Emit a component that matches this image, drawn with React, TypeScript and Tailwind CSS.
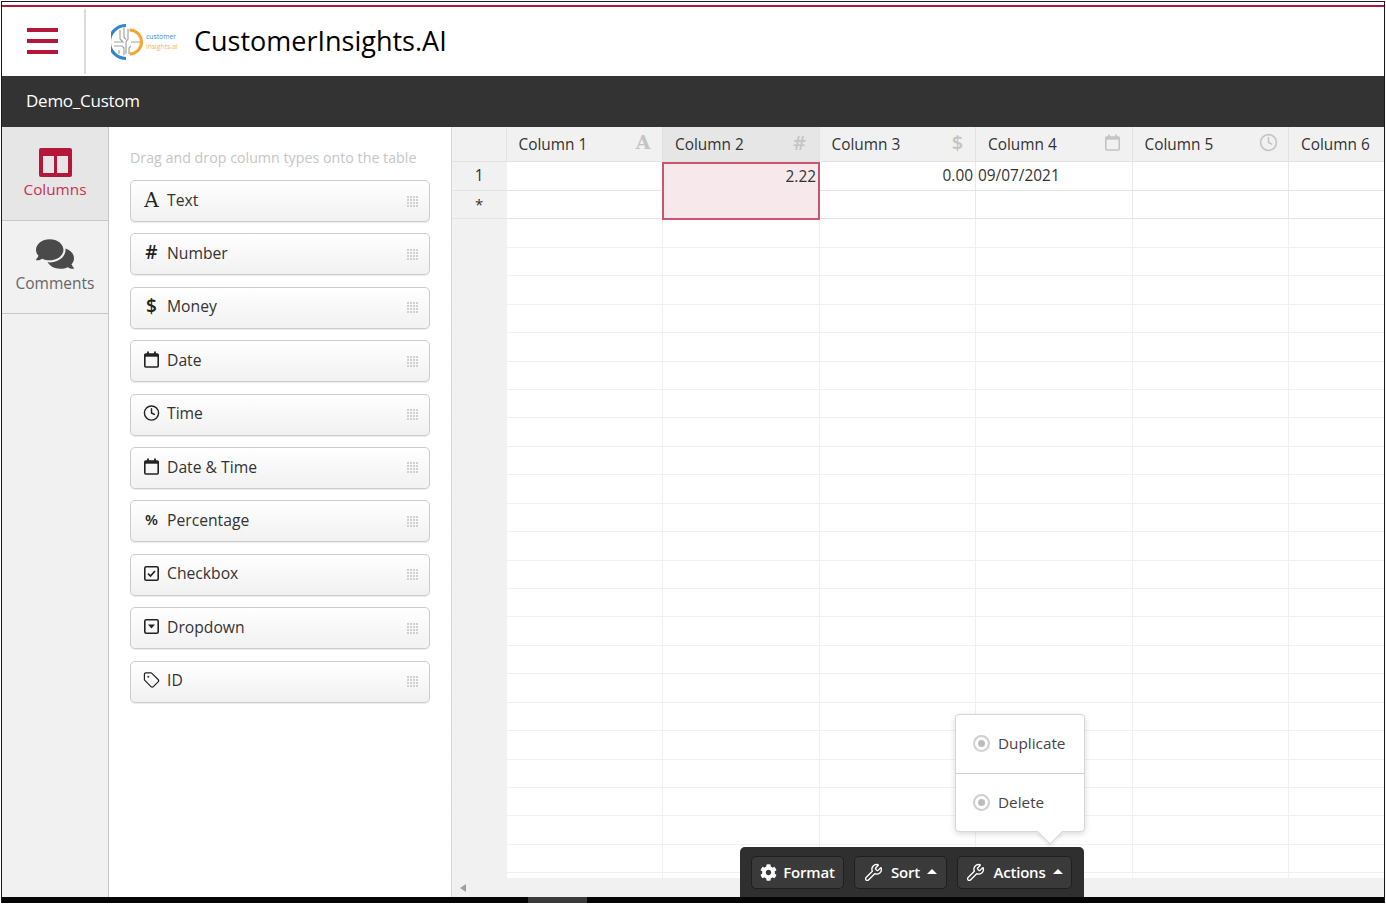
import React from 'react';
import { Clock, Wrench, Tag } from 'lucide-react';
import { FaComments, FaCog } from 'react-icons/fa';

const CalendarIcon: React.FC<{ className?: string }> = ({ className }) => (
  <svg viewBox="0 0 15 17" className={className} fill="none" stroke="currentColor" strokeWidth="1.6">
    <rect x="0.8" y="3" width="13.4" height="13" rx="1" />
    <path d="M0.8 4.4h13.4" strokeWidth="2.6" />
    <path d="M4 0.4v3M11 0.4v3" strokeWidth="1.8" />
  </svg>
);

const CheckIcon: React.FC = () => (
  <svg viewBox="0 0 15 15" className="w-[15px] h-[15px]" fill="none" stroke="currentColor" strokeWidth="1.6">
    <rect x="0.8" y="0.8" width="13.4" height="13.4" rx="1.5" />
    <path d="M4 7.6l2.5 2.5L11 5" strokeWidth="1.7" />
  </svg>
);

const DropdownIcon: React.FC = () => (
  <svg viewBox="0 0 15 15" className="w-[15px] h-[15px]" fill="none" stroke="currentColor" strokeWidth="1.6">
    <rect x="0.8" y="0.8" width="13.4" height="13.4" rx="1.5" />
    <path d="M4 5.6h7L7.5 9.6z" fill="currentColor" stroke="none" />
  </svg>
);

const Grip: React.FC = () => (
  <div className="grid grid-cols-4 gap-px w-[11px] h-[11px]">
    {Array.from({ length: 16 }).map((_, i) => (
      <span key={i} className="w-[2px] h-[2px] bg-[#d0d0d0]" />
    ))}
  </div>
);

const Logo: React.FC = () => (
  <div className="flex items-center gap-[2px] w-[68px]">
    <svg viewBox="0 0 33 36" className="w-[33px] h-[36px] shrink-0" fill="none">
      <path d="M15 1.5A16.5 16.5 0 0 0 15 34.5" stroke="#2f86c9" strokeWidth="3" />
      <path d="M18.5 6A12 12 0 0 1 18.5 30" stroke="#f5a531" strokeWidth="3" />
      <path
        d="M9 6v9l3 3H3M13 3.5v10l2 2M17 5v10l-2 3v12M3 22h8l2 2v7M20 18h9M20 22l-2 2v6M8 26v4"
        stroke="#a3a3a3"
        strokeWidth="1.2"
      />
    </svg>
    <div className="text-[6.8px] leading-[9.5px] whitespace-nowrap">
      <div className="text-[#3d8fcb]">customer</div>
      <div className="text-[#f2b463]">insights.ai</div>
    </div>
  </div>
);

const types = [
  { label: 'Text', icon: <span className="font-['DejaVu_Serif',serif] text-[20px] leading-none">A</span> },
  { label: 'Number', icon: <span className="font-semibold text-[19px] leading-none">#</span> },
  { label: 'Money', icon: <span className="font-semibold text-[19px] leading-none">$</span> },
  { label: 'Date', icon: <CalendarIcon className="w-[15px] h-[17px]" /> },
  { label: 'Time', icon: <Clock size={18} strokeWidth={2} /> },
  { label: 'Date & Time', icon: <CalendarIcon className="w-[15px] h-[17px]" /> },
  { label: 'Percentage', icon: <span className="font-semibold text-[15px] leading-none">%</span> },
  { label: 'Checkbox', icon: <CheckIcon /> },
  { label: 'Dropdown', icon: <DropdownIcon /> },
  { label: 'ID', icon: <Tag size={18} strokeWidth={1.7} /> },
];

const columns = [
  { name: 'Column 1', icon: <span className="font-['DejaVu_Serif',serif] font-bold text-[19px] leading-none">A</span> },
  { name: 'Column 2', icon: <span className="font-semibold text-[20px] leading-none">#</span>, active: true },
  { name: 'Column 3', icon: <span className="ml-[3px] font-semibold text-[20px] leading-none">$</span> },
  { name: 'Column 4', icon: <CalendarIcon className="w-[15px] h-[17px]" /> },
  { name: 'Column 5', icon: <Clock size={19} strokeWidth={2} className="-ml-[1px]" /> },
  { name: 'Column 6', icon: null },
];

const gridCols = 'grid grid-cols-[54.5px_156.5px_156.5px_156.5px_156.5px_156.5px_96px]';

const App: React.FC = () => {
  const emptyRows = Array.from({ length: 24 });

  return (
    <div className="w-[1386px] h-[904px] bg-white pt-px pl-px overflow-hidden font-['Open_Sans',sans-serif]">
      <div className="w-[1384px] h-[902px] flex flex-col border-x border-t border-[#1a1a1a] relative overflow-hidden">
        <div className="h-[3px] bg-white" />
        <div className="h-[2px] bg-[#a8193a]" />

        <header className="h-[69px] flex bg-white">
          <div className="w-[84px] my-[2px] pr-[2px] border-r-2 border-[#dcdcdc] flex items-center justify-center">
            <div className="w-[31px] mb-[2px] flex flex-col gap-[7px]">
              <span className="h-[4px] bg-[#b5173a]" />
              <span className="h-[4px] bg-[#b5173a]" />
              <span className="h-[4px] bg-[#b5173a]" />
            </div>
          </div>
          <div className="pl-[25px] flex items-center">
            <Logo />
            <h1 className="ml-[15px] mb-[2px] text-[27px] leading-none text-black">CustomerInsights.AI</h1>
          </div>
        </header>

        <div className="h-[51px] bg-[#333333] flex items-center pl-[24px] pb-[2px] text-[17px] tracking-[-0.25px] text-white">
          Demo_Custom
        </div>

        <div className="flex-1 flex min-h-0">
          <nav className="w-[107px] bg-[#f1f1f1] border-r border-[#c4c4c4] shrink-0">
            <div className="h-[94px] bg-[#e6e6e6] border-b border-[#c8c8c8] flex flex-col items-center pt-[21px]">
              <div className="w-[33px] h-[29px] rounded-[2px] bg-[#b5173a] px-[4px] pt-[8px] pb-[4px] flex gap-[3px]">
                <span className="flex-1 bg-[#e6e6e6]" />
                <span className="flex-1 bg-[#e6e6e6]" />
              </div>
              <span className="mt-[1px] text-[15.3px] leading-[22px] text-[#c5324f]">Columns</span>
            </div>
            <div className="h-[93px] border-b border-[#c8c8c8] flex flex-col items-center pt-[14px] text-[#4a4a4a]">
              <FaComments size={38} />
              <span className="-mt-[1px] text-[15.5px] leading-[22px] text-[#666]">Comments</span>
            </div>
          </nav>

          <aside className="w-[343px] shrink-0 bg-white border-r border-[#d8d8d8] pl-[21px] pt-[21px]">
            <p className="text-[14.25px] leading-[20px] whitespace-nowrap text-[#c6c6c6]">Drag and drop column types onto the table</p>
            <div className="mt-[12px] w-[300px] flex flex-col gap-[11.4px]">
              {types.map(type => (
                <div
                  key={type.label}
                  className="h-[42px] rounded-[5px] border border-[#cccccc] bg-gradient-to-b from-white to-[#f1f1f1] shadow-[0_1px_1px_rgba(0,0,0,0.08)] flex items-center pl-[12px] pr-[11px] text-[#222]"
                >
                  <span className="w-[17px] flex justify-center -mt-[3px]">{type.icon}</span>
                  <span className="ml-[7px] text-[15.7px] leading-none text-[#333] -mt-[1px]">{type.label}</span>
                  <span className="ml-auto"><Grip /></span>
                </div>
              ))}
            </div>
          </aside>

          <main className="flex-1 min-w-0 bg-[#f1f1f1] flex flex-col relative">
            <div className={`${gridCols} h-[35px] border-b border-[#e2e2e2]`}>
              <div className="border-r border-[#e2e2e2]" />
              {columns.map(col => (
                <div
                  key={col.name}
                  className={`flex items-center justify-between pl-[12px] pr-[10px] pt-[1px] border-r border-[#e2e2e2] text-[#c4c4c4] whitespace-nowrap overflow-hidden ${col.active ? 'bg-[#e6e6e6]' : ''}`}
                >
                  <span className="text-[15.4px] text-[#333]">{col.name}</span>
                  <span className="w-[18px] flex justify-center -mt-[4px]">{col.icon}</span>
                </div>
              ))}
            </div>

            <div className="h-[716px] overflow-hidden">
              <div className={`${gridCols} h-[29px] border-b border-[#e4e4e4] text-[15.4px] text-[#333]`}>
                <div className="flex items-center justify-center">1</div>
                <div className="bg-white border-r border-[#e8e8e8]" />
                <div className="bg-white border-r border-[#e8e8e8]" />
                <div className="bg-white border-r border-[#e8e8e8] flex items-center justify-end pr-[2px]">0.00</div>
                <div className="bg-white border-r border-[#e8e8e8] flex items-center pl-[2px]">09/07/2021</div>
                <div className="bg-white border-r border-[#e8e8e8]" />
                <div className="bg-white" />
              </div>
              <div className={`${gridCols} h-[28px] border-b border-[#e4e4e4] text-[15px] text-[#333]`}>
                <div className="flex items-center justify-center">*</div>
                {[0, 1, 2, 3, 4].map(i => (
                  <div key={i} className="bg-white border-r border-[#e8e8e8]" />
                ))}
                <div className="bg-white" />
              </div>
              {emptyRows.map((_, r) => (
                <div key={r} className={`${gridCols} ${r === 0 ? 'h-[28.93px]' : 'h-[28.43px]'} border-b border-[#f0f0f0]`}>
                  <div />
                  {[0, 1, 2, 3, 4].map(i => (
                    <div key={i} className="bg-white border-r border-[#f0f0f0]" />
                  ))}
                  <div className="bg-white" />
                </div>
              ))}
            </div>

            <div className="flex-1 flex items-center pl-[8px]">
              <span className="w-0 h-0 border-y-[4px] border-y-transparent border-r-[6px] border-r-[#a0a0a0]" />
            </div>

            {/* selected column */}
            <div className="absolute left-[210px] top-[35px] w-[158px] h-[58px] border-2 border-[#c9566f] bg-[#f6e8eb] text-right pr-[2px] text-[15.4px] leading-[26px] text-[#333]">
              2.22
            </div>

            {/* actions popup */}
            <div className="absolute left-[503px] top-[587px] w-[130px] h-[118px] bg-white rounded-[4px] border border-[#d6d6d6] shadow-[0_2px_6px_rgba(0,0,0,0.15)] text-[15.3px] text-[#444]">
              <span className="absolute left-[85px] -bottom-[10px] w-[18px] h-[18px] rotate-45 bg-white border-r border-b border-[#d6d6d6] shadow-[2px_2px_3px_rgba(0,0,0,0.08)]" />
              <div className="relative h-[59px] border-b border-[#cfcfcf] flex items-center pl-[17px] pb-[2px] gap-[8px]">
                <Radio />
                <span>Duplicate</span>
              </div>
              <div className="relative h-[57px] flex items-center pl-[17px] gap-[8px]">
                <Radio />
                <span>Delete</span>
              </div>
            </div>

            {/* bottom toolbar */}
            <div className="absolute left-[288px] top-[720px] w-[344px] h-[50px] bg-[#2f2f2f] rounded-t-[5px] flex items-center pl-[11px] pt-[1px] gap-[10px] text-white text-[15px] font-semibold tracking-[-0.2px]">
              <ToolButton className="w-[93px]">
                <FaCog size={17} className="-mr-[2px]" />
                <span>Format</span>
              </ToolButton>
              <ToolButton className="w-[93px]">
                <Wrench size={19} strokeWidth={1.7} />
                <span>Sort</span>
                <Caret />
              </ToolButton>
              <ToolButton className="w-[115px]">
                <Wrench size={19} strokeWidth={1.7} />
                <span>Actions</span>
                <Caret />
              </ToolButton>
            </div>
          </main>
        </div>

        <div className="h-[6px] bg-[#050505] relative shrink-0">
          <div className="absolute left-[526px] top-0 w-[59px] h-[6px] bg-[#3a3a3a]" />
        </div>
      </div>
    </div>
  );
};

const Radio: React.FC = () => (
  <span className="w-[17px] h-[17px] rounded-full border-2 border-[#cfcfcf] flex items-center justify-center">
    <span className="w-[7px] h-[7px] rounded-full bg-[#bdbdbd]" />
  </span>
);

const Caret: React.FC = () => (
  <span className="-ml-[1px] mb-[3px] w-0 h-0 border-x-[5px] border-x-transparent border-b-[5px] border-b-white" />
);

const ToolButton: React.FC<{ className: string; children: React.ReactNode }> = ({ className, children }) => (
  <div className={`${className} h-[33px] rounded-[5px] border border-[#1f1f1f] bg-[#3a3a3a] flex items-center justify-center gap-[8px]`}>
    {children}
  </div>
);

export default App;
